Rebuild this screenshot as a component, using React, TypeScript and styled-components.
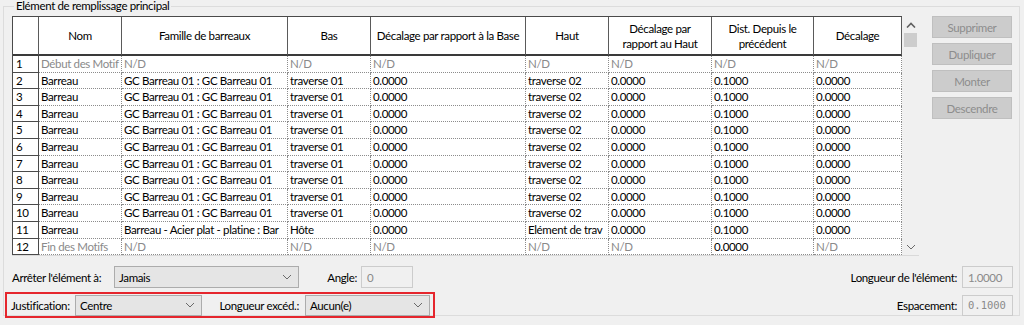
import React from "react";
import styled, { createGlobalStyle } from "styled-components";

const GlobalStyle = createGlobalStyle`
    html, body {
        margin: 0;
        padding: 0;
        background: #f0f0f0;
        font-family: Lato, "Liberation Sans", sans-serif;
        font-size: 11.5px;
        letter-spacing: -0.35px;
        color: #000;
    }
`;

const COLS = "26px 83px 166px 83px 155px 83px 103px 102px 88px";

const Page = styled.div`
    width: 1024px;
    height: 325px;
    overflow: hidden;
`;

const GroupBox = styled.fieldset`
    margin: 0 4px 0 3px;
    padding: 4px 6px 4px 8px;
    border: 1px solid #dcdcdc;
    height: 316px;
    box-sizing: border-box;
`;

const Legend = styled.legend`
    padding: 0 2px;
    margin-left: 2px;
    line-height: 12px;
`;

const TopRow = styled.div`
    display: flex;
    align-items: flex-start;
`;

const GridFrame = styled.div`
    display: flex;
    width: 907px;
    height: 240px;
    border-right: 1px solid #d9d9d9;
    border-bottom: 1px solid #d9d9d9;
    box-sizing: border-box;
    background: #f0f0f0;
`;

const Grid = styled.div`
    display: grid;
    grid-template-columns: ${COLS};
    grid-template-rows: 39px repeat(12, 16.6px);
    width: 890px;
    height: 239px;
    align-content: start;
    border-left: 1px solid #4a4a4a;
    border-top: 1px solid #4a4a4a;
    box-sizing: border-box;
    background: #fff;
`;

const HeadCell = styled.div`
    display: flex;
    align-items: center;
    justify-content: center;
    text-align: center;
    line-height: 15px;
    padding: 0 2px;
    border-right: 1px solid #5a5a5a;
    border-bottom: 2px solid #3a3a3a;
    box-sizing: border-box;
    background: #fff;
`;

const RowHead = styled.div`
    padding-left: 3px;
    line-height: 16.5px;
    border-right: 1px solid #4a4a4a;
    border-bottom: 1px solid #4a4a4a;
    box-sizing: border-box;
    white-space: nowrap;
`;

const Cell = styled.div<{ $dim?: boolean }>`
    padding-left: 2px;
    line-height: 16.5px;
    white-space: nowrap;
    overflow: hidden;
    color: ${(p) => (p.$dim ? "#8a8a8a" : "#000")};
    border-right: 1px dotted #8c8c8c;
    border-bottom: 1px dotted #8c8c8c;
    box-sizing: border-box;
`;

const Scrollbar = styled.div`
    width: 17px;
    display: flex;
    flex-direction: column;
    align-items: center;
    background: #f0f0f0;
`;

const ScrollArrow = styled.div`
    height: 17px;
    width: 17px;
    display: flex;
    align-items: center;
    justify-content: center;
`;

const ScrollTrack = styled.div`
    flex: 1;
    width: 17px;
    display: flex;
    justify-content: center;
`;

const Thumb = styled.div`
    width: 13px;
    height: 14px;
    background: #cdcdcd;
`;

const ButtonColumn = styled.div`
    display: flex;
    flex-direction: column;
    gap: 5px;
    margin-left: 13px;
`;

const DisabledButton = styled.button`
    width: 80px;
    height: 22px;
    padding: 0;
    font-family: inherit;
    font-size: 11.5px;
    letter-spacing: -0.35px;
    color: #8d8d8d;
    background: #cccccc;
    border: 1px solid #bfbfbf;
`;

const ControlRow = styled.div<{ $top: number }>`
    display: flex;
    align-items: center;
    margin-top: ${(p) => p.$top}px;
`;

const Label = styled.span<{ $width?: number; $right?: boolean }>`
    display: inline-block;
    width: ${(p) => (p.$width ? `${p.$width}px` : "auto")};
    text-align: ${(p) => (p.$right ? "right" : "left")};
    white-space: nowrap;
`;

const Gap = styled.span<{ $w: number }>`
    display: inline-block;
    width: ${(p) => p.$w}px;
`;

const Select = styled.div<{ $width: number; $height: number }>`
    display: flex;
    align-items: center;
    justify-content: space-between;
    width: ${(p) => p.$width}px;
    height: ${(p) => p.$height}px;
    padding: 0 6px 0 4px;
    box-sizing: border-box;
    background: #e5e5e5;
    border: 1px solid #acacac;
`;

const TextBox = styled.div<{ $width: number; $height: number; $mono?: boolean }>`
    display: flex;
    align-items: center;
    width: ${(p) => p.$width}px;
    height: ${(p) => p.$height}px;
    padding-left: 5px;
    box-sizing: border-box;
    background: #f0f0f0;
    border: 1px solid #cccccc;
    color: #8a8a8a;
    font-family: ${(p) => (p.$mono ? '"DejaVu Sans Mono", monospace' : "inherit")};
    font-size: ${(p) => (p.$mono ? "10.5px" : "11.5px")};
    letter-spacing: ${(p) => (p.$mono ? "0" : "-0.35px")};
`;

const Spacer = styled.div`
    flex: 1;
`;

const Highlight = styled.div`
    display: flex;
    align-items: center;
    width: 430px;
    height: 26px;
    margin-left: -7px;
    padding-left: 4px;
    box-sizing: border-box;
    border: 2px solid #e5262d;
`;

const Chevron = ({ up }: { up?: boolean }) => (
    <svg width="10" height="6" viewBox="0 0 10 6">
        <path
            d={up ? "M1 5.5 L5 1.5 L9 5.5" : "M1 1 L5 5 L9 1"}
            fill="none"
            stroke={up ? "#606060" : "#6a6a6a"}
            strokeWidth={up ? 1.6 : 1}
        />
    </svg>
);

type Row = { n: number; cells: string[]; dim?: boolean[] };

const barreau = ["Barreau", "GC Barreau 01 : GC Barreau 01", "traverse 01", "0.0000", "traverse 02", "0.0000", "0.1000", "0.0000"];

const rows: Row[] = [
    { n: 1, cells: ["Début des Motif", "N/D", "N/D", "N/D", "N/D", "N/D", "N/D", "N/D"], dim: [true, true, true, true, true, true, true, true] },
    ...[2, 3, 4, 5, 6, 7, 8, 9, 10].map((n) => ({ n, cells: barreau })),
    { n: 11, cells: ["Barreau", "Barreau - Acier plat - platine : Bar", "Hôte", "0.0000", "Elément de trav", "0.0000", "0.1000", "0.0000"] },
    { n: 12, cells: ["Fin des Motifs", "N/D", "N/D", "N/D", "N/D", "N/D", "0.0000", "N/D"], dim: [true, true, true, true, true, true, false, true] },
];

const headers = ["Nom", "Famille de barreaux", "Bas", "Décalage par rapport à la Base", "Haut", "Décalage par rapport au Haut", "Dist. Depuis le précédent", "Décalage"];

export default function App() {
    return (
        <Page>
            <GlobalStyle />
            <GroupBox>
                <Legend>Elément de remplissage principal</Legend>
                <TopRow>
                    <GridFrame>
                        <Grid>
                            <HeadCell />
                            {headers.map((h) => (
                                <HeadCell key={h}>{h}</HeadCell>
                            ))}
                            {rows.map((r) => (
                                <React.Fragment key={r.n}>
                                    <RowHead>{r.n}</RowHead>
                                    {r.cells.map((c, i) => (
                                        <Cell key={i} $dim={r.dim?.[i]}>
                                            {c}
                                        </Cell>
                                    ))}
                                </React.Fragment>
                            ))}
                        </Grid>
                        <Scrollbar>
                            <ScrollArrow>
                                <Chevron up />
                            </ScrollArrow>
                            <ScrollTrack>
                                <Thumb />
                            </ScrollTrack>
                            <ScrollArrow>
                                <Chevron />
                            </ScrollArrow>
                        </Scrollbar>
                    </GridFrame>
                    <ButtonColumn>
                        <DisabledButton disabled>Supprimer</DisabledButton>
                        <DisabledButton disabled>Dupliquer</DisabledButton>
                        <DisabledButton disabled>Monter</DisabledButton>
                        <DisabledButton disabled>Descendre</DisabledButton>
                    </ButtonColumn>
                </TopRow>

                <ControlRow $top={10}>
                    <Label $width={102}>Arrêter l'élément à:</Label>
                    <Select $width={185} $height={22}>
                        <span>Jamais</span>
                        <Chevron />
                    </Select>
                    <Label $width={58} $right>
                        Angle:
                    </Label>
                    <Gap $w={4} />
                    <TextBox $width={52} $height={22}>
                        0
                    </TextBox>
                    <Spacer />
                    <Label>Longueur de l'élément:</Label>
                    <Gap $w={5} />
                    <TextBox $width={51} $height={22}>
                        1.0000
                    </TextBox>
                </ControlRow>

                <ControlRow $top={4}>
                    <Highlight>
                        <Label $width={64}>Justification:</Label>
                        <Select $width={127} $height={21}>
                            <span>Centre</span>
                            <Chevron />
                        </Select>
                        <Label $width={97} $right>
                            Longueur excéd.:
                        </Label>
                        <Gap $w={6} />
                        <Select $width={125} $height={21}>
                            <span>Aucun(e)</span>
                            <Chevron />
                        </Select>
                    </Highlight>
                    <Spacer />
                    <Label>Espacement:</Label>
                    <Gap $w={5} />
                    <TextBox $width={51} $height={21} $mono>
                        0.1000
                    </TextBox>
                </ControlRow>
            </GroupBox>
        </Page>
    );
}
